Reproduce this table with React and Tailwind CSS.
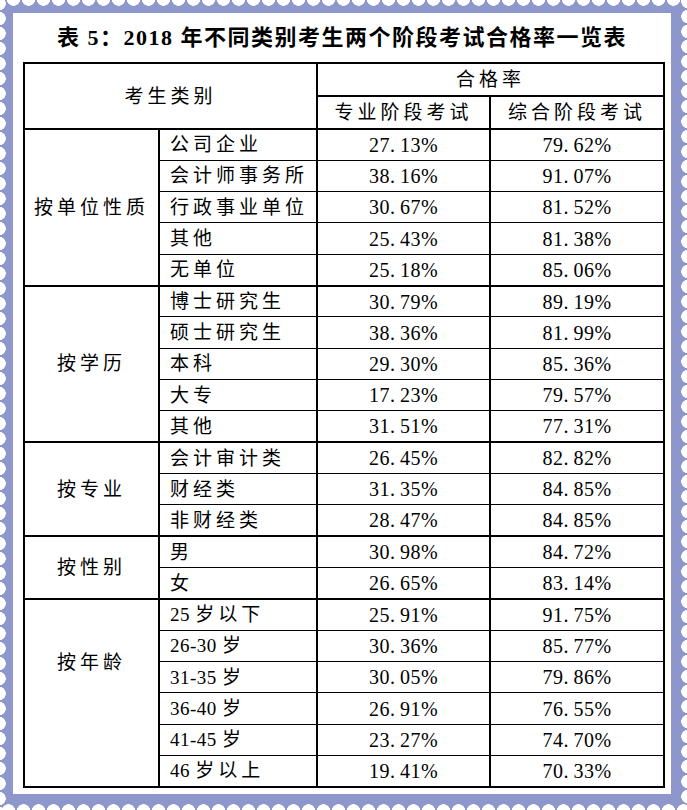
import React from "react";

const groups = [
  {
    g: "按单位性质",
    items: [
      ["公司企业", "27.13%", "79.62%"],
      ["会计师事务所", "38.16%", "91.07%"],
      ["行政事业单位", "30.67%", "81.52%"],
      ["其他", "25.43%", "81.38%"],
      ["无单位", "25.18%", "85.06%"],
    ],
  },
  {
    g: "按学历",
    items: [
      ["博士研究生", "30.79%", "89.19%"],
      ["硕士研究生", "38.36%", "81.99%"],
      ["本科", "29.30%", "85.36%"],
      ["大专", "17.23%", "79.57%"],
      ["其他", "31.51%", "77.31%"],
    ],
  },
  {
    g: "按专业",
    items: [
      ["会计审计类", "26.45%", "82.82%"],
      ["财经类", "31.35%", "84.85%"],
      ["非财经类", "28.47%", "84.85%"],
    ],
  },
  {
    g: "按性别",
    items: [
      ["男", "30.98%", "84.72%"],
      ["女", "26.65%", "83.14%"],
    ],
  },
  {
    g: "按年龄",
    lift: true,
    items: [
      ["25 岁以下", "25.91%", "91.75%"],
      ["26-30 岁", "30.36%", "85.77%"],
      ["31-35 岁", "30.05%", "79.86%"],
      ["36-40 岁", "26.91%", "76.55%"],
      ["41-45 岁", "23.27%", "74.70%"],
      ["46 岁以上", "19.41%", "70.33%"],
    ],
  },
];

function Txt({ s }) {
  const parts = s.split(/([\x00-\x7F]+)/).filter((p) => p.length > 0);
  return (
    <>
      {parts.map((p, i) =>
        /^[\x00-\x7F]+$/.test(p) ? (
          <span key={i} className="tracking-[0.5px]">
            {p.split(/(\.)/).map((q, j) =>
              q === "." ? (
                <span key={j} className="inline-block w-[0.5em] text-left">
                  .
                </span>
              ) : (
                <React.Fragment key={j}>{q}</React.Fragment>
              )
            )}
          </span>
        ) : (
          <span key={i} className="tracking-[4px]">
            {p}
          </span>
        )
      )}
    </>
  );
}

export default function App() {
  return (
    <div className="relative w-[687px] h-[810px] bg-[#8e97cc] pt-[13px] pl-[13px] pr-[16px] pb-[16px] overflow-hidden font-['Liberation_Serif','Noto_Sans_CJK_SC',serif] text-black">
      <div className="absolute top-0 left-0 w-full h-[7px] bg-[radial-gradient(circle_at_50%_-1px,#fff_6.5px,transparent_7px)] bg-[length:15px_7px] bg-[position:6px_0px] bg-repeat-x" />
      <div className="absolute bottom-0 left-0 w-full h-[7px] bg-[radial-gradient(circle_at_50%_8px,#fff_6.5px,transparent_7px)] bg-[length:15px_7px] bg-[position:1px_0px] bg-repeat-x" />
      <div className="absolute top-0 left-0 h-full w-[7px] bg-[radial-gradient(circle_at_-1px_50%,#fff_6.5px,transparent_7px)] bg-[length:7px_15px] bg-[position:0px_11px] bg-repeat-y" />
      <div className="absolute top-0 right-0 h-full w-[7px] bg-[radial-gradient(circle_at_8px_50%,#fff_6.5px,transparent_7px)] bg-[length:7px_15px] bg-[position:0px_9px] bg-repeat-y" />

      <div className="relative bg-white w-full h-full flex flex-col">
        <div className="h-[49px] flex items-center justify-center text-[22px] font-bold tracking-[1.5px] leading-none">
          表 5：2018 年不同类别考生两个阶段考试合格率一览表
        </div>
        <table className="ml-[10px] w-[640px] table-fixed border-collapse border-2 border-black text-[19px] leading-none">
          <colgroup>
            <col className="w-[135px]" />
            <col className="w-[158px]" />
            <col className="w-[173px]" />
            <col className="w-[174px]" />
          </colgroup>
          <thead>
            <tr className="h-[33px]">
              <th
                colSpan={2}
                rowSpan={2}
                className="border-2 border-black font-normal text-center p-0"
              >
                <Txt s="考生类别" />
              </th>
              <th colSpan={2} className="border-2 border-black font-normal text-center p-0">
                <Txt s="合格率" />
              </th>
            </tr>
            <tr className="h-[33px]">
              <th className="border-2 border-black font-normal text-center p-0">
                <Txt s="专业阶段考试" />
              </th>
              <th className="border-2 border-black font-normal text-center p-0">
                <Txt s="综合阶段考试" />
              </th>
            </tr>
          </thead>
          <tbody>
            {groups.map((grp) =>
              grp.items.map((it, idx) => {
                const top = idx === 0 ? "border-t-2" : "border-t";
                const bottom = idx === grp.items.length - 1 ? "border-b-2" : "border-b";
                return (
                  <tr key={grp.g + idx} className="h-[31.33px]">
                    {idx === 0 && (
                      <td
                        rowSpan={grp.items.length}
                        className={`border-2 border-black text-center p-0 ${grp.lift ? "pb-[60px]" : ""}`}
                      >
                        <Txt s={grp.g} />
                      </td>
                    )}
                    <td className={`border-x-2 ${top} ${bottom} border-black text-left pl-[10px] p-0`}>
                      <Txt s={it[0]} />
                    </td>
                    <td className={`border-x-2 ${top} ${bottom} border-black text-center p-0 text-[20px]`}>
                      <Txt s={it[1]} />
                    </td>
                    <td className={`border-x-2 ${top} ${bottom} border-black text-center p-0 text-[20px]`}>
                      <Txt s={it[2]} />
                    </td>
                  </tr>
                );
              })
            )}
          </tbody>
        </table>
      </div>
    </div>
  );
}
